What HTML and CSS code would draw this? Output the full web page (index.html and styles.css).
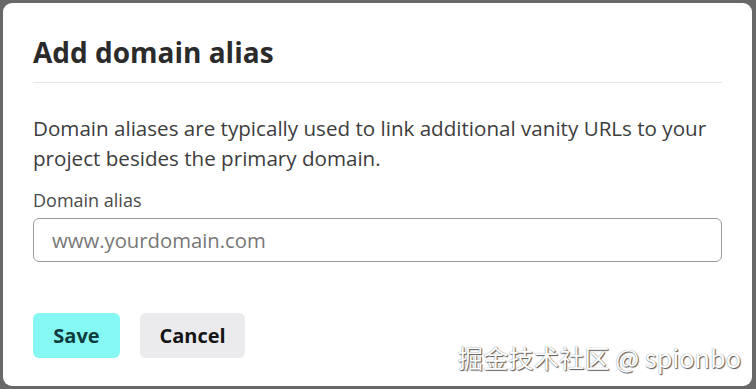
FILE: index.html
```html
<!DOCTYPE html>
<html>
<head>
<meta charset="utf-8">
<link rel="stylesheet" href="styles.css">
</head>
<body>
<div class="dialog">
  <h2 class="title">Add domain alias</h2>
  <p class="desc">Domain aliases are typically used to link additional vanity URLs to your project besides the primary domain.</p>
  <label class="label" for="alias">Domain alias</label>
  <input class="input" id="alias" type="text" placeholder="www.yourdomain.com">
  <div class="actions">
    <button class="btn btn-save">Save</button>
    <button class="btn btn-cancel">Cancel</button>
  </div>
</div>
<div class="watermark">掘金技术社区 @ spionbo</div>
</body>
</html>
```
FILE: styles.css
```css
html, body {
  margin: 0;
  padding: 0;
}
body {
  width: 756px;
  height: 389px;
  background: #686868;
  font-family: "Open Sans", sans-serif;
  position: relative;
  overflow: hidden;
  padding: 3px 4px 3px 3px;
  box-sizing: border-box;
}
.dialog {
  background: #fff;
  border-radius: 9px;
  height: 383px;
  box-sizing: border-box;
  padding: 25px 30px 0 30px;
  display: flex;
  flex-direction: column;
}
.title {
  margin: 0;
  font-size: 28px;
  font-weight: 700;
  color: #2b2b2b;
  line-height: 48px;
  padding-bottom: 6px;
  border-bottom: 1px solid #e6e6e6;
}
.desc {
  margin: 30px 0 0 0;
  font-size: 20.6px;
  line-height: 30px;
  color: #3d3d3d;
}
.label {
  margin-top: 15px;
  font-size: 18px;
  line-height: 24px;
  color: #4a4a4a;
}
.input {
  margin-top: 6px;
  height: 44px;
  box-sizing: border-box;
  border: 1px solid #9a9a9a;
  border-radius: 6px;
  padding: 0 18px;
  font-family: inherit;
  font-size: 20.3px;
  color: #333;
  outline: none;
}
.input::placeholder {
  color: #777;
}
.actions {
  margin-top: 51px;
  display: flex;
  gap: 20px;
}
.btn {
  height: 45px;
  border: none;
  border-radius: 6px;
  font-family: inherit;
  font-size: 20px;
  font-weight: 700;
  padding: 0;
}
.btn-save {
  background: #86f8f4;
  color: #0f3d3f;
  width: 87px;
}
.btn-cancel {
  background: #ebebed;
  color: #141414;
  width: 105px;
}
.watermark {
  position: absolute;
  right: 15px;
  bottom: 18px;
  font-family: "Noto Sans CJK SC", sans-serif;
  font-size: 25.3px;
  line-height: 28px;
  color: #fff;
  text-shadow: 1px 1px 1px #555, 0 0 1px #777;
}
```
